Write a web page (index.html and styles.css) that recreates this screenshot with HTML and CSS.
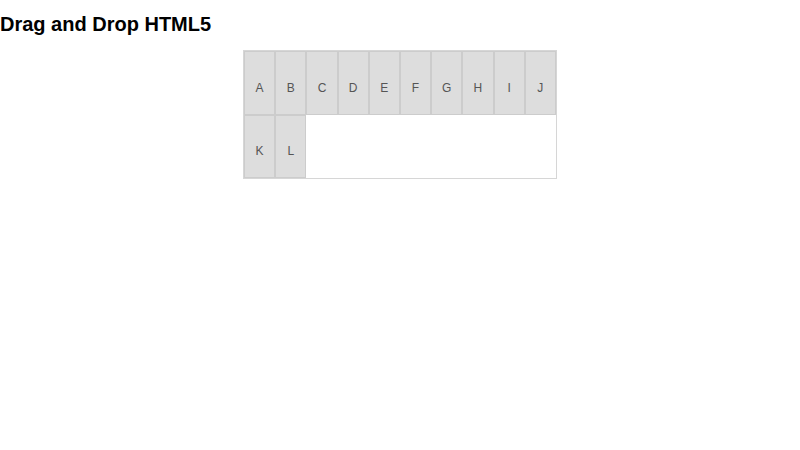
FILE: index.html
```html
<!DOCTYPE html>
<html>
<head>
<meta charset="utf-8">
<link rel="stylesheet" href="styles.css">
</head>
<body>
<h1 class="title">Drag and Drop HTML5</h1>
<div class="board">
  <div class="item">A</div>
  <div class="item">B</div>
  <div class="item">C</div>
  <div class="item">D</div>
  <div class="item">E</div>
  <div class="item">F</div>
  <div class="item">G</div>
  <div class="item">H</div>
  <div class="item">I</div>
  <div class="item">J</div>
  <div class="item">K</div>
  <div class="item">L</div>
</div>
</body>
</html>
```
FILE: styles.css
```css
html, body {
  margin: 0;
  padding: 0;
  background: #fff;
  font-family: "Liberation Sans", Arial, sans-serif;
}
.title {
  margin: 0;
  padding-top: 12px;
  font-size: 20px;
  line-height: 24px;
  font-weight: bold;
  color: #000;
}
.board {
  width: 312px;
  margin: 14px auto 0;
  border: 1px solid #d6d6d6;
  display: flex;
  flex-wrap: wrap;
}
.item {
  box-sizing: border-box;
  width: 10%;
  height: 63.5px;
  padding-top: 10px;
  background: #dddddd;
  border: 1px solid #cccccc;
  display: flex;
  align-items: center;
  justify-content: center;
  font-size: 12px;
  color: #555;
}
```
